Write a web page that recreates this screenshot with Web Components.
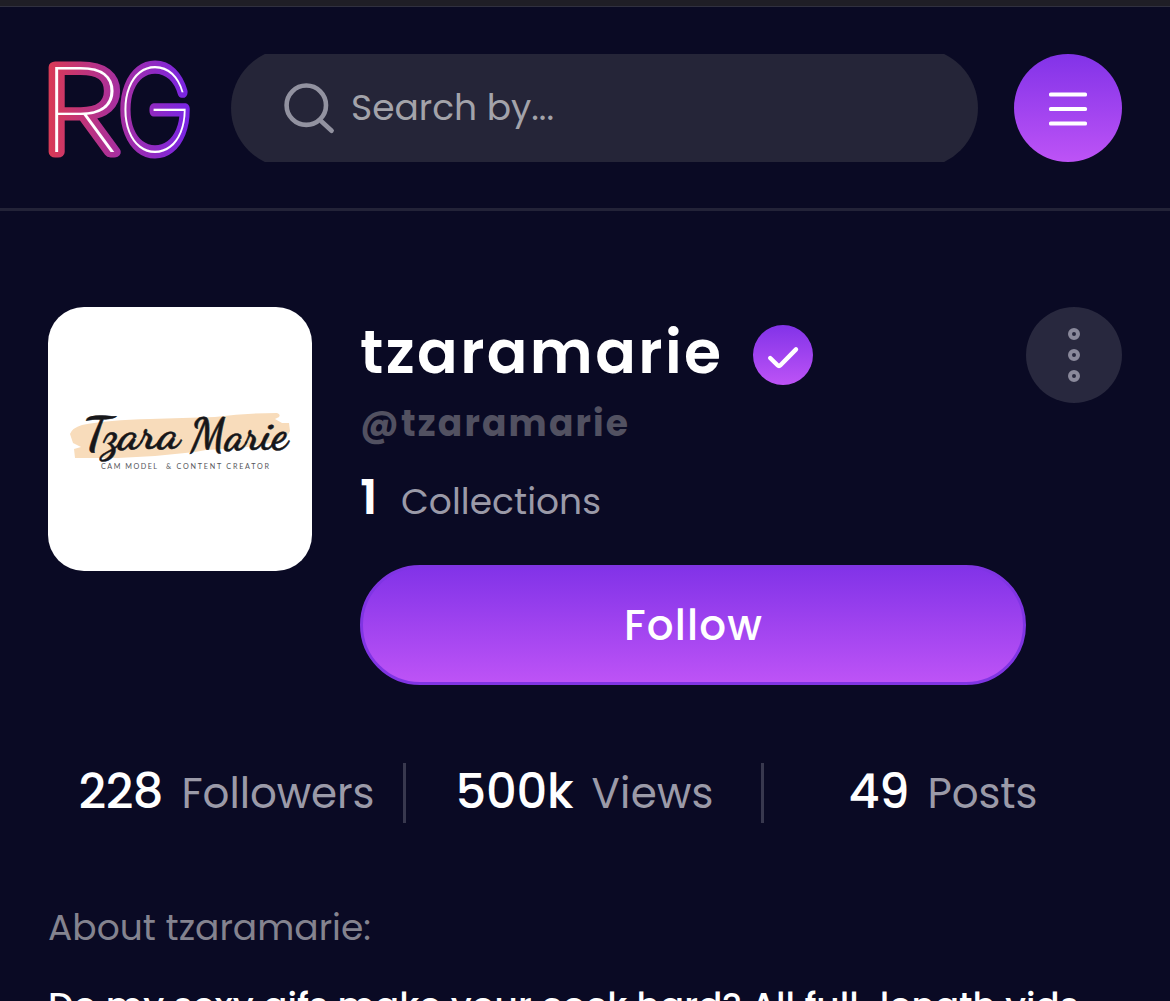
<!DOCTYPE html>
<html lang="en">
<head>
    <meta charset="utf-8">
    <title>tzaramarie</title>
    <style>
        html, body {
            margin: 0;
            height: 1001px;
            overflow: hidden;
            background: #0a0a24;
            color: #fff;
            font-family: Poppins, Inter, "Open Sans", sans-serif;
        }
    </style>
</head>
<body>
    <profile-page></profile-page>

    <script>
        // One line of text, tracked so that it fills the given width
        class FitText extends HTMLElement {
            constructor() {
                super();
                this.shadowDOM = this.attachShadow({mode: "open"});
            }

            connectedCallback() {
                const width = Number(this.getAttribute("width"));
                this.shadowDOM.innerHTML = `
                    <style>
                        :host {
                            display: inline-block;
                            width: ${width}px;
                            white-space: nowrap;
                        }
                    </style>
                    <span><slot></slot></span>
                `;
                const span = this.shadowDOM.querySelector("span");
                const count = this.textContent.length;
                if (count > 1) {
                    const natural = span.getBoundingClientRect().width;
                    span.style.letterSpacing = `${(width - natural) / (count - 1)}px`;
                }
            }
        }

        class SiteLogo extends HTMLElement {
            constructor() {
                super();
                this.shadowDOM = this.attachShadow({mode: "open"});
                this.shadowDOM.innerHTML = `
                    <style>
                        :host { display: block; width: 142px; height: 100px; }
                        svg { display: block; overflow: visible; }
                        text { font-family: Poppins, sans-serif; font-weight: 200; font-size: 120px; }
                    </style>
                    <svg width="142" height="100" viewBox="0 0 142 100">
                        <defs>
                            <linearGradient id="neon" gradientUnits="userSpaceOnUse" x1="0" y1="0" x2="142" y2="0">
                                <stop offset="0" stop-color="#d93a55"/>
                                <stop offset=".5" stop-color="#a62fa0"/>
                                <stop offset="1" stop-color="#7825e6"/>
                            </linearGradient>
                        </defs>
                        <g fill="#fff" stroke="url(#neon)" stroke-width="11" stroke-linejoin="round" paint-order="stroke">
                            <text x="-5" y="93.5" textLength="77" lengthAdjust="spacingAndGlyphs">R</text>
                            <text x="71" y="93.5" textLength="72" lengthAdjust="spacingAndGlyphs">G</text>
                        </g>
                    </svg>
                `;
            }
        }

        class SearchField extends HTMLElement {
            constructor() {
                super();
                this.shadowDOM = this.attachShadow({mode: "open"});
                this.shadowDOM.innerHTML = `
                    <style>
                        :host {
                            display: flex;
                            align-items: center;
                            height: 108px;
                            overflow: hidden;
                        }
                        .field {
                            box-sizing: border-box;
                            flex: none;
                            width: 100%;
                            height: 120px;
                            padding-left: 52px;
                            display: flex;
                            align-items: center;
                            gap: 16px;
                            border-radius: 60px;
                            background: #252538;
                            color: #a3a3aa;
                            font-size: 36px;
                        }
                        svg { flex: none; }
                    </style>
                    <div class="field">
                        <svg width="52" height="52" viewBox="0 0 52 52" fill="none" stroke="#9292a0" stroke-width="4.6" stroke-linecap="round">
                            <circle cx="23.3" cy="23.2" r="19.7"/>
                            <path d="M38.3 39.2 48.6 48.7"/>
                        </svg>
                        <fit-text width="203">Search by...</fit-text>
                    </div>
                `;
            }
        }

        class MenuButton extends HTMLElement {
            constructor() {
                super();
                this.shadowDOM = this.attachShadow({mode: "open"});
                this.shadowDOM.innerHTML = `
                    <style>
                        :host {
                            display: block;
                            width: 108px;
                            height: 108px;
                            border-radius: 50%;
                            background: linear-gradient(#8233e8, #bd53f6);
                        }
                        svg { display: block; }
                    </style>
                    <svg width="108" height="108" viewBox="0 0 108 108" fill="#fff">
                        <rect x="35" y="38.5" width="38" height="4" rx="1.6"/>
                        <rect x="35" y="53" width="38" height="4" rx="1.6"/>
                        <rect x="35" y="67.5" width="38" height="4" rx="1.6"/>
                    </svg>
                `;
            }
        }

        class SiteHeader extends HTMLElement {
            constructor() {
                super();
                this.shadowDOM = this.attachShadow({mode: "open"});
                this.shadowDOM.innerHTML = `
                    <style>
                        :host {
                            box-sizing: border-box;
                            display: flex;
                            align-items: center;
                            height: 205px;
                            padding: 0 48px;
                            border-top: 1px solid #30303f;
                            border-bottom: 3px solid #232338;
                        }
                        search-field { flex: 1; margin: 0 36px 0 41px; }
                    </style>
                    <site-logo></site-logo>
                    <search-field></search-field>
                    <menu-button></menu-button>
                `;
            }
        }

        class BrandAvatar extends HTMLElement {
            constructor() {
                super();
                this.shadowDOM = this.attachShadow({mode: "open"});
                this.shadowDOM.innerHTML = `
                    <style>
                        :host {
                            display: block;
                            width: 264px;
                            height: 264px;
                            border-radius: 36px;
                            overflow: hidden;
                            background: #fff;
                        }
                        svg { display: block; }
                        .script {
                            font: 700 46px "Dancing Script", "Kaushan Script", cursive;
                            fill: #17171a;
                            stroke: #17171a;
                            stroke-width: .5px;
                        }
                        .tagline { font: 7.2px Lato, sans-serif; fill: #55555a; }
                    </style>
                    <svg width="264" height="264" viewBox="0 0 264 264">
                        <path fill="#f8dcbb" d="M22 127 Q24 121 34 118 Q60 113 102 112 L167 110 Q200 106 229 106 Q233 107 231 110 L227 112 L234 116 L241 116 L242 124 L239 129 L228 135 L193 141 L158 143 L147 145 L107 149 L70 151 L27 151 L26 142 L33 140 L25 136 Z"/>
                        <text class="script" x="35" y="142" textLength="97" lengthAdjust="spacingAndGlyphs" transform="rotate(-1 36 142)">Tzara</text>
                        <text class="script" x="142" y="143" textLength="98" lengthAdjust="spacingAndGlyphs" transform="rotate(-1 144 143)">Marie</text>
                        <text class="tagline" x="53" y="162" textLength="56">CAM MODEL</text>
                        <text class="tagline" x="118" y="162" textLength="103">&amp; CONTENT CREATOR</text>
                    </svg>
                `;
            }
        }

        class VerifiedBadge extends HTMLElement {
            constructor() {
                super();
                this.shadowDOM = this.attachShadow({mode: "open"});
                this.shadowDOM.innerHTML = `
                    <style>
                        :host {
                            display: block;
                            width: 60px;
                            height: 60px;
                            border-radius: 50%;
                            background: linear-gradient(#8233e8, #bd53f6);
                        }
                        svg { display: block; }
                    </style>
                    <svg width="60" height="60" viewBox="0 0 60 60" fill="none" stroke="#fff" stroke-width="4.4" stroke-linecap="round" stroke-linejoin="round">
                        <path d="M17.2 33 24.6 40.3Q26 41.7 27.4 40.3L43 24.4"/>
                    </svg>
                `;
            }
        }

        class MoreButton extends HTMLElement {
            constructor() {
                super();
                this.shadowDOM = this.attachShadow({mode: "open"});
                this.shadowDOM.innerHTML = `
                    <style>
                        :host {
                            display: block;
                            width: 96px;
                            height: 96px;
                            border-radius: 50%;
                            background: #28283e;
                        }
                        svg { display: block; }
                    </style>
                    <svg width="96" height="96" viewBox="0 0 96 96" fill="none" stroke="#8a899b" stroke-width="4">
                        <circle cx="48" cy="27" r="4"/>
                        <circle cx="48" cy="48" r="4"/>
                        <circle cx="48" cy="69" r="4"/>
                    </svg>
                `;
            }
        }

        class FollowButton extends HTMLElement {
            constructor() {
                super();
                this.shadowDOM = this.attachShadow({mode: "open"});
                this.shadowDOM.innerHTML = `
                    <style>
                        :host {
                            box-sizing: border-box;
                            display: flex;
                            justify-content: center;
                            height: 120px;
                            border: 3px solid #8035e3;
                            border-radius: 60px;
                            background: linear-gradient(#8233e8, #bd53f6);
                            font-size: 42px;
                            font-weight: 500;
                            line-height: 116px;
                        }
                    </style>
                    <slot></slot>
                `;
            }
        }

        class ProfileCard extends HTMLElement {
            constructor() {
                super();
                this.shadowDOM = this.attachShadow({mode: "open"});
                this.shadowDOM.innerHTML = `
                    <style>
                        :host {
                            display: flex;
                            margin-top: 96px;
                        }
                        .info { flex: 1; margin-left: 48px; }
                        .title { display: flex; gap: 32px; height: 90px; }
                        .name { font-size: 60px; font-weight: 600; line-height: 91px; }
                        verified-badge { margin-top: 18px; }
                        .handle { height: 52px; font-size: 36px; font-weight: 700; line-height: 54px; color: #525161; }
                        .collections { display: flex; align-items: baseline; gap: 24px; height: 96px; line-height: 98px; margin-bottom: 20px; }
                        .count { font-size: 48px; font-weight: 600; }
                        .label { font-size: 36px; color: #9b9aa8; }
                    </style>
                    <brand-avatar></brand-avatar>
                    <div class="info">
                        <div class="title">
                            <fit-text class="name" width="361">tzaramarie</fit-text>
                            <verified-badge></verified-badge>
                        </div>
                        <div class="handle"><fit-text width="268">@tzaramarie</fit-text></div>
                        <div class="collections">
                            <fit-text class="count" width="17">1</fit-text>
                            <fit-text class="label" width="200">Collections</fit-text>
                        </div>
                        <follow-button><fit-text width="138">Follow</fit-text></follow-button>
                    </div>
                    <more-button></more-button>
                `;
            }
        }

        class StatItem extends HTMLElement {
            constructor() {
                super();
                this.shadowDOM = this.attachShadow({mode: "open"});
                this.shadowDOM.innerHTML = `
                    <style>
                        :host {
                            display: flex;
                            justify-content: center;
                            align-items: baseline;
                            gap: 18px;
                            height: 60px;
                            padding-left: 2px;
                            line-height: 58px;
                            border-right: 3px solid #38384e;
                        }
                        :host(:last-child) { padding-left: 0; border-right: 0; }
                        ::slotted([slot="value"]) { font-size: 48px; font-weight: 500; }
                        ::slotted([slot="label"]) { font-size: 42px; color: #9b9aa8; }
                    </style>
                    <slot name="value"></slot>
                    <slot name="label"></slot>
                `;
            }
        }

        class ProfileStats extends HTMLElement {
            constructor() {
                super();
                this.shadowDOM = this.attachShadow({mode: "open"});
                this.shadowDOM.innerHTML = `
                    <style>
                        :host {
                            display: grid;
                            grid-template-columns: repeat(3, 1fr);
                            margin-top: 78px;
                        }
                    </style>
                    <stat-item>
                        <fit-text slot="value" width="85">228</fit-text>
                        <fit-text slot="label" width="193">Followers</fit-text>
                    </stat-item>
                    <stat-item>
                        <fit-text slot="value" width="118">500k</fit-text>
                        <fit-text slot="label" width="122">Views</fit-text>
                    </stat-item>
                    <stat-item>
                        <fit-text slot="value" width="61">49</fit-text>
                        <fit-text slot="label" width="110">Posts</fit-text>
                    </stat-item>
                `;
            }
        }

        class ProfileAbout extends HTMLElement {
            constructor() {
                super();
                this.shadowDOM = this.attachShadow({mode: "open"});
                this.shadowDOM.innerHTML = `
                    <style>
                        :host { display: block; margin-top: 78px; font-size: 36px; }
                        .heading { height: 54px; line-height: 54px; color: #84838f; }
                        .bio { margin-top: 24px; height: 54px; line-height: 54px; font-weight: 500; }
                    </style>
                    <div class="heading"><fit-text width="323">About tzaramarie:</fit-text></div>
                    <div class="bio"><fit-text width="1031">Do my sexy gifs make your cock hard? All full-length vids</fit-text></div>
                `;
            }
        }

        class ProfilePage extends HTMLElement {
            constructor() {
                super();
                this.shadowDOM = this.attachShadow({mode: "open"});
                this.shadowDOM.innerHTML = `
                    <style>
                        :host { display: block; width: 1170px; }
                        .strip { height: 6px; background: #1f1e26; }
                        main { padding: 0 48px; }
                    </style>
                    <div class="strip"></div>
                    <site-header></site-header>
                    <main>
                        <profile-card></profile-card>
                        <profile-stats></profile-stats>
                        <profile-about></profile-about>
                    </main>
                `;
            }
        }

        customElements.define("site-logo", SiteLogo);
        customElements.define("search-field", SearchField);
        customElements.define("menu-button", MenuButton);
        customElements.define("site-header", SiteHeader);
        customElements.define("brand-avatar", BrandAvatar);
        customElements.define("verified-badge", VerifiedBadge);
        customElements.define("more-button", MoreButton);
        customElements.define("follow-button", FollowButton);
        customElements.define("profile-card", ProfileCard);
        customElements.define("stat-item", StatItem);
        customElements.define("profile-stats", ProfileStats);
        customElements.define("profile-about", ProfileAbout);
        customElements.define("profile-page", ProfilePage);
        customElements.define("fit-text", FitText);
    </script>
</body>
</html>
